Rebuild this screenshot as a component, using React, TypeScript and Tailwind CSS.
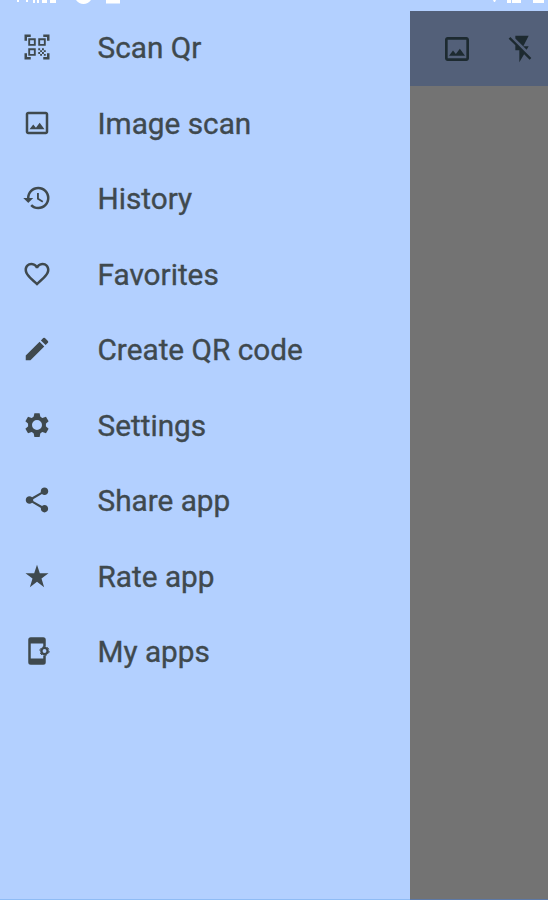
import type { ComponentType } from 'react';
import {
    MdEdit,
    MdFavoriteBorder,
    MdFlashOff,
    MdHistory,
    MdOutlineImage,
    MdQrCodeScanner,
    MdShare,
} from 'react-icons/md';

type IconProps = { size?: number };

function GearIcon({ size = 24 }: IconProps) {
    return (
        <svg width={size} height={size} viewBox="0 0 24 24" fill="none" stroke="currentColor">
            <circle cx="12" cy="12" r="5.6" strokeWidth="3.2" />
            {[0, 60, 120, 180, 240, 300].map(angle => (
                <path key={angle} d="M9.900 2.500h4.200l.7 3.500H9.200z" fill="currentColor" stroke="none" transform={`rotate(${angle} 12 12)`} />
            ))}
        </svg>
    );
}

function StarIcon({ size = 24 }: IconProps) {
    return (
        <svg width={size} height={size} viewBox="0 0 24 24" fill="currentColor">
            <path d="M12 2.900l2.250 6.800H21.200l-5.600 4.200 2.100 7-5.700-4.300-5.700 4.300 2.100-7-5.600-4.200h6.950z" />
        </svg>
    );
}

function PhoneAppsIcon({ size = 24 }: IconProps) {
    return (
        <svg width={size} height={size} viewBox="0 0 24 24" fill="currentColor">
            <path d="M19 8.500V3a2 2 0 0 0-2-2H7a2 2 0 0 0-2 2v18a2 2 0 0 0 2 2h10a2 2 0 0 0 2-2v-5.500h-2V18H7V6h10v2.500z" />
            <circle cx="18" cy="12" r="2.500" fill="none" stroke="currentColor" strokeWidth="1.900" />
            <circle cx="18" cy="12" r="3.700" fill="none" stroke="currentColor" strokeWidth=".8" strokeDasharray="1.900 1.975" />
        </svg>
    );
}

const MENU_ITEMS: { label: string; icon: ComponentType<IconProps> }[] = [
    { label: 'Scan Qr', icon: MdQrCodeScanner },
    { label: 'Image scan', icon: MdOutlineImage },
    { label: 'History', icon: MdHistory },
    { label: 'Favorites', icon: MdFavoriteBorder },
    { label: 'Create QR code', icon: MdEdit },
    { label: 'Settings', icon: GearIcon },
    { label: 'Share app', icon: MdShare },
    { label: 'Rate app', icon: StarIcon },
    { label: 'My apps', icon: PhoneAppsIcon },
];

export default function App() {
    return (
        <div className="flex h-[900px] w-[548px] flex-col overflow-hidden bg-[#b3d0ff] font-['Roboto',sans-serif]">
            {/* Status bar */}
            <div className="flex h-[11px] shrink-0 items-start justify-between overflow-hidden">
                <svg width="130" height="11" fill="#fff">
                    <path d="M17 0h2v2h-2zM26 0h2v2h-2zM33 0h2v3h-2zM37 0h2v3h-2zM42 0h5v3h-5zM50 0h6v3h-6zM76 0h15q-3 4-7.500 4T76 0zM106 0h14v3.500h-14z" />
                </svg>
                <svg width="70" height="11" fill="#fff">
                    <path d="M15 0h3l-1 2h-1zM29 0h4v3h-4zM34 0h9v3h-9zM55 0h11v3H55z" />
                </svg>
            </div>

            <div className="flex min-h-0 flex-1">
                {/* Drawer */}
                <nav className="flex w-[410px] shrink-0 flex-col">
                    {MENU_ITEMS.map(({ label, icon: Icon }) => (
                        <button key={label} className="flex h-[75.5px] w-full items-center pl-[22px] text-[#3f494e]">
                            <span className="pb-[3px]">
                                <Icon size={30} />
                            </span>
                            <span className="ml-[45.5px] pb-[1px] text-[29.75px] leading-none whitespace-nowrap [-webkit-text-stroke:0.35px_#3f494e]">
                                {label}
                            </span>
                        </button>
                    ))}
                    <div className="mt-auto h-px bg-[#8fbcf5]" />
                </nav>

                {/* Dimmed scanner screen */}
                <main className="flex flex-1 flex-col bg-[#737373]">
                    <header className="flex h-[75px] items-center gap-[33px] bg-[#536079] pl-[31px] text-[#1d2a30]">
                        <MdOutlineImage size={32} className="shrink-0" />
                        <MdFlashOff size={32} className="shrink-0" />
                    </header>
                    <div className="mt-auto h-px bg-[#5c79a8]" />
                </main>
            </div>
        </div>
    );
}
